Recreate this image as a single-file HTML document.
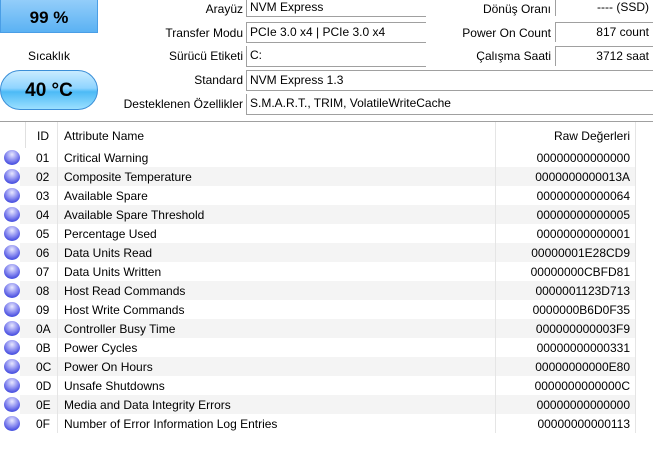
<!DOCTYPE html>
<html><head><style>
body{margin:0;width:653px;height:466px;background:#fff;font-family:"Liberation Sans",sans-serif;font-size:12px;color:#000;position:relative;overflow:hidden}
.a{position:absolute;white-space:nowrap}
.lbl{position:absolute;text-align:right;white-space:nowrap}
.fld{position:absolute;border-left:1px solid #a0a0a0;border-top:1px solid #a0a0a0;border-bottom:1px solid #a0a0a0;box-sizing:border-box;padding-left:3px;line-height:19px;white-space:nowrap}
.rf{position:absolute;border-left:1px solid #a0a0a0;border-top:1px solid #a0a0a0;box-sizing:border-box;padding-right:4px;text-align:right;line-height:19px}
.row{position:absolute;left:20px;width:615px;height:19px;line-height:21px}
.row.s{background:#f4f4f4}
.dot{position:absolute;left:4px;width:16px;height:15px;border-radius:50%;background:radial-gradient(circle at 50% 30%,#e8e8ff 0,#8a8cf0 45%,#4a50e0 75%,#3ab0f0 100%)}
</style></head><body>
<div class="a" style="left:0;top:-8px;width:98px;height:41px;background:linear-gradient(#9fd3fb,#5bb2f3);border:1px solid #4a9ee6;box-sizing:border-box;text-align:center;line-height:50px;font-size:17px;font-weight:bold">99 %</div>
<div class="a" style="left:0;top:49px;width:98px;text-align:center">Sıcaklık</div>
<div class="a" style="left:0;top:70px;width:98px;height:40px;border-radius:20px;background:linear-gradient(#c9ecff 0%,#8fd4ff 45%,#4cbaf6 55%,#9be0ff 100%);border:1px solid #3b8fd8;box-sizing:border-box;text-align:center;line-height:40px;font-size:19px;font-weight:bold">40 °C</div>

<div class="lbl" style="right:410px;top:2px">Arayüz</div>
<div class="lbl" style="right:410px;top:26px">Transfer Modu</div>
<div class="lbl" style="right:410px;top:49px">Sürücü Etiketi</div>
<div class="lbl" style="right:410px;top:73px">Standard</div>
<div class="lbl" style="right:410px;top:97px">Desteklenen Özellikler</div>
<div class="fld" style="left:246px;top:-2px;width:180px;height:19px;border-top:none">NVM Express</div>
<div class="fld" style="left:246px;top:22px;width:180px;height:21px">PCIe 3.0 x4 | PCIe 3.0 x4</div>
<div class="fld" style="left:246px;top:46px;width:180px;height:21px;border-top:none">C:</div>
<div class="fld" style="left:246px;top:70px;width:407px;height:21px">NVM Express 1.3</div>
<div class="fld" style="left:246px;top:94px;width:407px;height:21px;border-top:none">S.M.A.R.T., TRIM, VolatileWriteCache</div>

<div class="lbl" style="right:102px;top:2px">Dönüş Oranı</div>
<div class="lbl" style="right:102px;top:26px">Power On Count</div>
<div class="lbl" style="right:102px;top:49px">Çalışma Saati</div>
<div class="rf" style="left:555px;top:-2px;width:98px;height:18px;border-top:none">---- (SSD)</div>
<div class="rf" style="left:555px;top:22px;width:98px;height:20px">817 count</div>
<div class="rf" style="left:555px;top:46px;width:98px;height:20px">3712 saat</div>

<div class="a" style="left:0;top:121px;width:653px;height:1px;background:#a0a0a0"></div>
<div class="a" style="left:25px;top:122px;width:1px;height:26px;background:#e0e0e0"></div>
<div class="a" style="left:57px;top:122px;width:1px;height:311px;background:#e5e5e5;z-index:2"></div>
<div class="a" style="left:495px;top:122px;width:1px;height:311px;background:#e5e5e5;z-index:2"></div>
<div class="a" style="left:635px;top:122px;width:1px;height:311px;background:#e5e5e5;z-index:2"></div>
<div class="a" style="left:37px;top:129px">ID</div>
<div class="a" style="left:64px;top:129px">Attribute Name</div>
<div class="a" style="right:23px;top:129px">Raw Değerleri</div>

<div class="row" style="top:148px"><span class="a" style="left:16px">01</span><span class="a" style="left:44px">Critical Warning</span><span class="a" style="right:5px">00000000000000</span></div>
<div class="row s" style="top:167px"><span class="a" style="left:16px">02</span><span class="a" style="left:44px">Composite Temperature</span><span class="a" style="right:5px">0000000000013A</span></div>
<div class="row" style="top:186px"><span class="a" style="left:16px">03</span><span class="a" style="left:44px">Available Spare</span><span class="a" style="right:5px">00000000000064</span></div>
<div class="row s" style="top:205px"><span class="a" style="left:16px">04</span><span class="a" style="left:44px">Available Spare Threshold</span><span class="a" style="right:5px">00000000000005</span></div>
<div class="row" style="top:224px"><span class="a" style="left:16px">05</span><span class="a" style="left:44px">Percentage Used</span><span class="a" style="right:5px">00000000000001</span></div>
<div class="row s" style="top:243px"><span class="a" style="left:16px">06</span><span class="a" style="left:44px">Data Units Read</span><span class="a" style="right:5px">00000001E28CD9</span></div>
<div class="row" style="top:262px"><span class="a" style="left:16px">07</span><span class="a" style="left:44px">Data Units Written</span><span class="a" style="right:5px">00000000CBFD81</span></div>
<div class="row s" style="top:281px"><span class="a" style="left:16px">08</span><span class="a" style="left:44px">Host Read Commands</span><span class="a" style="right:5px">0000001123D713</span></div>
<div class="row" style="top:300px"><span class="a" style="left:16px">09</span><span class="a" style="left:44px">Host Write Commands</span><span class="a" style="right:5px">0000000B6D0F35</span></div>
<div class="row s" style="top:319px"><span class="a" style="left:16px">0A</span><span class="a" style="left:44px">Controller Busy Time</span><span class="a" style="right:5px">000000000003F9</span></div>
<div class="row" style="top:338px"><span class="a" style="left:16px">0B</span><span class="a" style="left:44px">Power Cycles</span><span class="a" style="right:5px">00000000000331</span></div>
<div class="row s" style="top:357px"><span class="a" style="left:16px">0C</span><span class="a" style="left:44px">Power On Hours</span><span class="a" style="right:5px">00000000000E80</span></div>
<div class="row" style="top:376px"><span class="a" style="left:16px">0D</span><span class="a" style="left:44px">Unsafe Shutdowns</span><span class="a" style="right:5px">0000000000000C</span></div>
<div class="row s" style="top:395px"><span class="a" style="left:16px">0E</span><span class="a" style="left:44px">Media and Data Integrity Errors</span><span class="a" style="right:5px">00000000000000</span></div>
<div class="row" style="top:414px"><span class="a" style="left:16px">0F</span><span class="a" style="left:44px">Number of Error Information Log Entries</span><span class="a" style="right:5px">00000000000113</span></div>

<div class="dot" style="top:150px"></div><div class="dot" style="top:169px"></div><div class="dot" style="top:188px"></div><div class="dot" style="top:207px"></div><div class="dot" style="top:226px"></div><div class="dot" style="top:245px"></div><div class="dot" style="top:264px"></div><div class="dot" style="top:283px"></div><div class="dot" style="top:302px"></div><div class="dot" style="top:321px"></div><div class="dot" style="top:340px"></div><div class="dot" style="top:359px"></div><div class="dot" style="top:378px"></div><div class="dot" style="top:397px"></div><div class="dot" style="top:416px"></div>
</body></html>
